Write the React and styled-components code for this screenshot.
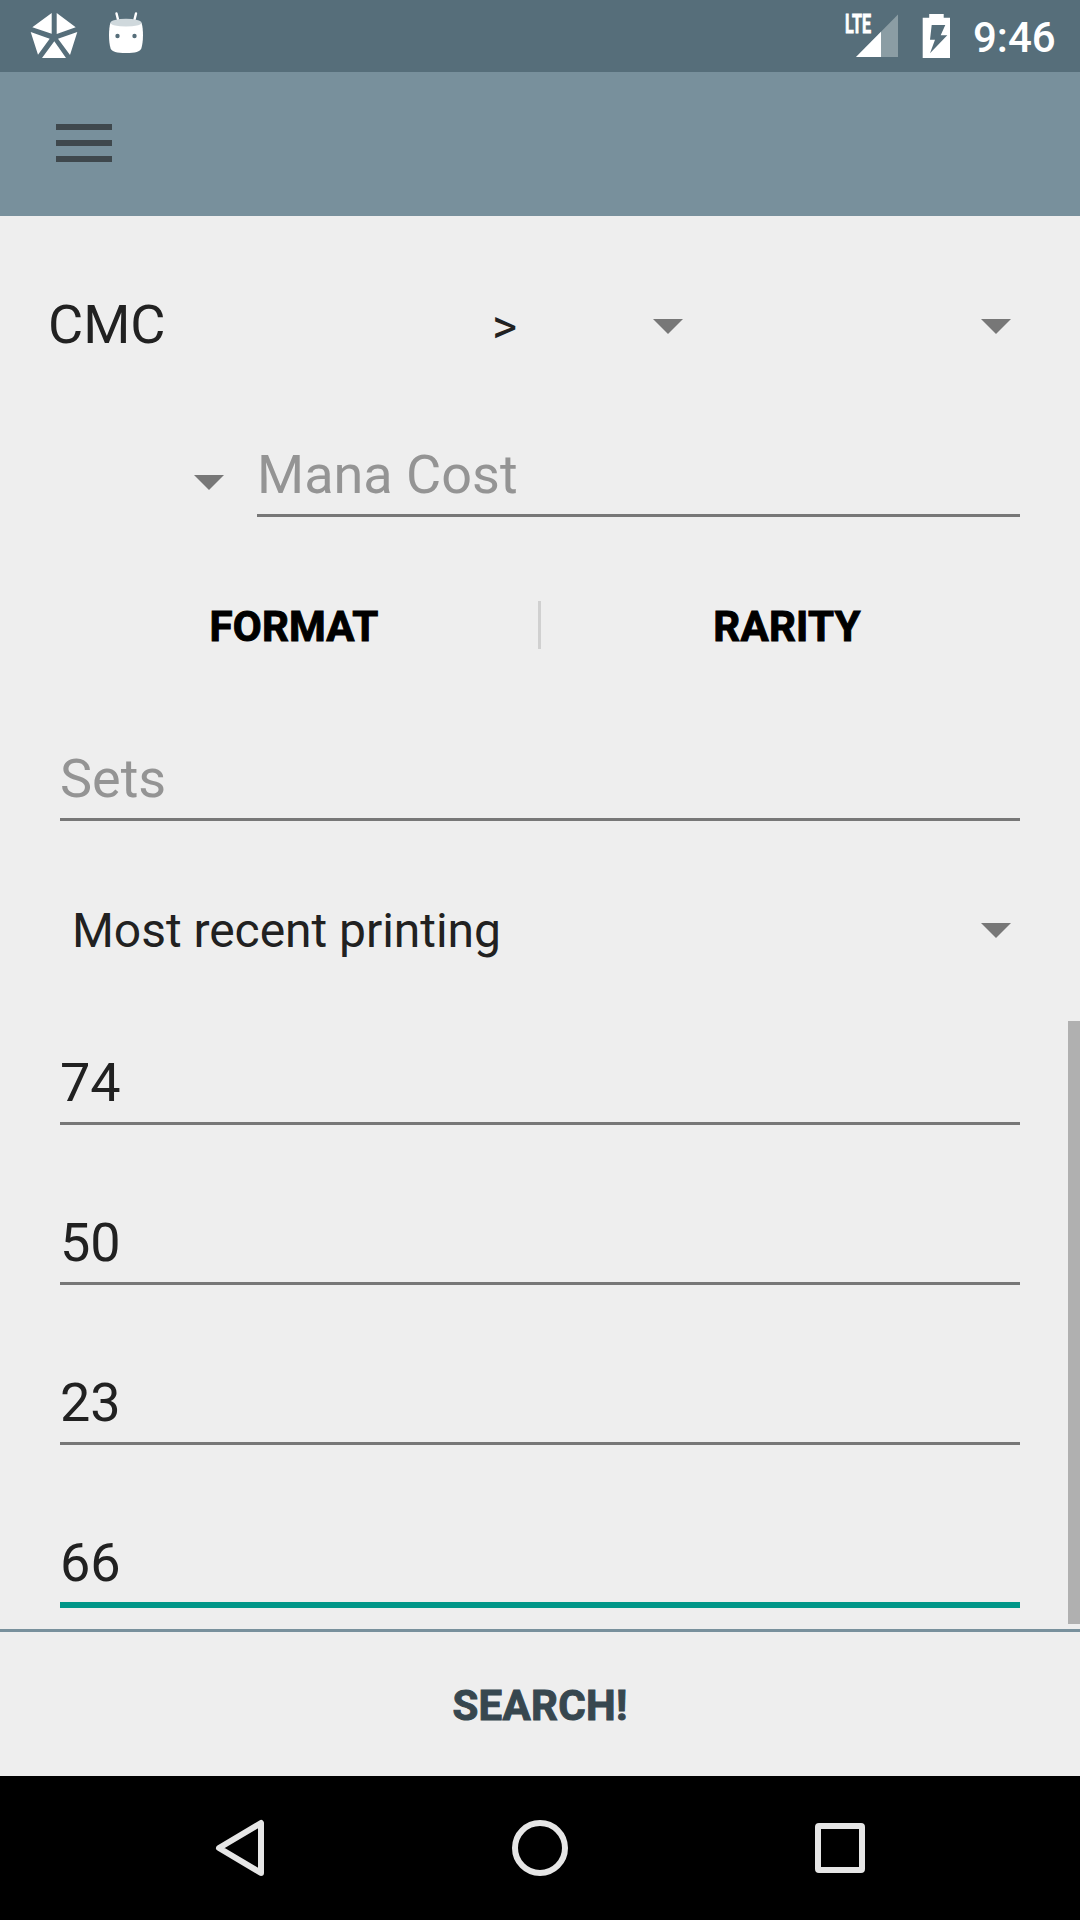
import React from "react";
import styled, { createGlobalStyle } from "styled-components";

const GlobalStyle = createGlobalStyle`
  *, *::before, *::after { box-sizing: border-box; }
  html, body { margin: 0; padding: 0; background: #eeeeee; }
  body { font-family: Roboto, "Noto Sans", sans-serif; overflow: hidden; }
`;

const Screen = styled.div`
  width: 1080px;
  height: 1920px;
  display: flex;
  flex-direction: column;
  background: #eeeeee;
  color: #212121;
`;

const StatusBar = styled.header`
  height: 72px;
  flex: none;
  display: flex;
  justify-content: space-between;
  background: #566e7a;
  color: #ffffff;
`;

const StatusIcons = styled.div`
  display: flex;
  height: 72px;
  gap: ${(p) => p.$gap || 0}px;
  padding-left: ${(p) => p.$left || 0}px;
  padding-right: ${(p) => p.$right || 0}px;
`;

const StatusGlyph = styled.svg`
  display: block;
  flex: none;
  height: 72px;
  width: ${(p) => p.$width}px;
`;

const Signal = styled.div`
  position: relative;
  width: 70px;
`;

const NetworkType = styled.span`
  position: absolute;
  left: 1px;
  top: 9px;
  font-size: 26px;
  line-height: 31px;
  font-weight: 700;
  -webkit-text-stroke: 0.8px #ffffff;
  transform: scaleX(0.62);
  transform-origin: left center;
`;

const Clock = styled.time`
  margin-left: 23px;
  width: 84px;
  font-size: 42px;
  line-height: 75px;
  font-weight: 500;
`;

const AppBar = styled.div`
  height: 144px;
  flex: none;
  background: #78909c;
  padding: 52px 56px;
`;

const MenuButton = styled.div`
  width: 56px;
  display: flex;
  flex-direction: column;
  gap: 10px;
`;

const MenuBar = styled.span`
  height: 6px;
  background: #3f484d;
`;

const ScrollArea = styled.main`
  position: relative;
  height: 1413px;
  flex: none;
  padding: 49px 60px 0;
  display: flex;
  flex-direction: column;
`;

const ScrollThumb = styled.div`
  position: absolute;
  right: 0;
  top: 805px;
  width: 12px;
  height: 603px;
  background: #b0b0b0;
`;

const CmcRow = styled.div`
  height: 120px;
  display: grid;
  grid-template-columns: 433px 202px 1fr;
  align-items: center;
  margin: 0 9px 0 -12px;
`;

const Label = styled.span`
  font-size: 54px;
  line-height: 64px;
`;

const Spinner = styled.div`
  display: flex;
  align-items: center;
  justify-content: space-between;
  height: ${(p) => p.$height || 60}px;
  padding-left: ${(p) => p.$inset || 0}px;
  font-size: 48px;
  line-height: 60px;
  letter-spacing: -0.05px;
  white-space: nowrap;
`;

const Operator = styled.span`
  padding-top: 4px;
`;

const Caret = styled.i`
  width: 0;
  height: 0;
  margin: 3px 0 0 auto;
  border: 15px solid transparent;
  border-top-color: #777777;
  border-bottom-width: 0;
`;

const PrintingSpinner = styled(Spinner)`
  margin: 80px 9px 4px 0;

  ${Caret} {
    margin-top: -1px;
  }
`;

const ManaRow = styled.div`
  margin-top: 58px;
  height: 74px;
  display: grid;
  grid-template-columns: 164px 1fr;
  column-gap: 33px;
`;

const Field = styled.div`
  margin-top: ${(p) => p.$gap || 0}px;
  height: ${(p) => (p.$focused ? 77 : 74)}px;
  border-bottom: ${(p) => (p.$focused ? "6px solid #009688" : "3px solid #777777")};
  font-size: 54px;
  line-height: 64px;
  white-space: nowrap;
  color: ${(p) => (p.$hint ? "#949494" : "#212121")};
`;

const ButtonBar = styled.div`
  margin: 84px -11px 0 -12px;
  height: 48px;
  display: flex;
  align-items: center;
`;

const FlatButton = styled.div`
  flex: 1;
  padding: 3px 0 0 2px;
  text-align: center;
  font-size: 42px;
  line-height: 48px;
  font-weight: 700;
  letter-spacing: 0.2px;
  color: #000000;
  -webkit-text-stroke: 1px currentColor;
`;

const Divider = styled.span`
  width: 3px;
  height: 48px;
  background: #d0d0d0;
`;

const SearchButton = styled.div`
  height: 147px;
  flex: none;
  border-top: 3px solid #78909c;
  text-align: center;
  font-size: 42px;
  line-height: 148px;
  font-weight: 700;
  letter-spacing: 0.3px;
  color: #37474f;
  -webkit-text-stroke: 1px currentColor;
`;

const NavBar = styled.nav`
  flex: 1;
  display: flex;
  justify-content: center;
  align-items: center;
  gap: 240px;
  background: #000000;
`;

const NavIcon = styled.svg`
  width: 60px;
  height: 60px;
  fill: none;
  stroke: #e6e6e6;
  stroke-width: 6;
  stroke-linejoin: round;
`;

const entries = ["74", "50", "23", "66"];

function PinwheelIcon() {
  return (
    <StatusGlyph $width={48} viewBox="0 0 48 72" fill="#fff">
      <path d="M21.7 13v20.7L2.3 27.3zM26.7 13v21l19-6.7zM.7 32l19 6.7L8 54.7zM47.3 32l-19.3 6.7 12 16.3zM24.3 41.3L12 58h24z" />
    </StatusGlyph>
  );
}

function RobotIcon() {
  return (
    <StatusGlyph $width={36} viewBox="0 0 36 72">
      <path d="M8.5 13.5l2 8M28 13.5l-2 8" stroke="#fff" strokeWidth="2.4" strokeLinecap="round" />
      <path d="M2.4 23C.5 29 .5 42 2.6 48.5c1.2 3.2 6 4.5 15.4 4.5s14.2-1.3 15.3-4.5c2.2-6.5 2.2-19.5.3-25.5z" fill="#fff" />
      <ellipse cx="18" cy="22.7" rx="15.6" ry="3.9" fill="#cfd8dc" />
      <circle cx="9.5" cy="36" r="2.2" fill="#566e7a" />
      <circle cx="26.5" cy="36" r="2.2" fill="#566e7a" />
    </StatusGlyph>
  );
}

function SignalIcon() {
  return (
    <StatusGlyph $width={56} viewBox="0 0 56 72">
      <path d="M54 14.5V57H12z" fill="#8b9da4" />
      <path d="M37 31.7V57H12z" fill="#fff" />
    </StatusGlyph>
  );
}

function BatteryIcon() {
  return (
    <StatusGlyph $width={36} viewBox="0 0 36 72">
      <path d="M16 14h15v3.7h7V58H9V17.700h7z" transform="translate(0 0)" fill="none" />
      <path d="M15.500 14h14.500v3.700h7V58H9V17.700h6.500z" transform="translate(-.3 0)" fill="#fff" />
      <path d="M17.700 25h13.600l-4.600 10.300h6.600L16 53.300l5-13.600h-5z" fill="#566e7a" />
    </StatusGlyph>
  );
}

export default function App() {
  return (
    <>
      <GlobalStyle />
      <Screen>
        <StatusBar>
          <StatusIcons $left={30} $gap={30}>
            <PinwheelIcon />
            <RobotIcon />
          </StatusIcons>
          <StatusIcons $right={23}>
            <Signal>
              <SignalIcon />
              <NetworkType>LTE</NetworkType>
            </Signal>
            <BatteryIcon />
            <Clock>9:46</Clock>
          </StatusIcons>
        </StatusBar>

        <AppBar>
          <MenuButton>
            <MenuBar />
            <MenuBar />
            <MenuBar />
          </MenuButton>
        </AppBar>

        <ScrollArea>
          <CmcRow>
            <Label>CMC</Label>
            <Spinner $inset={11}>
              <Operator>&gt;</Operator>
              <Caret />
            </Spinner>
            <Spinner>
              <Caret />
            </Spinner>
          </CmcRow>

          <ManaRow>
            <Spinner $height={76}>
              <Caret />
            </Spinner>
            <Field $hint>Mana Cost</Field>
          </ManaRow>

          <ButtonBar>
            <FlatButton>FORMAT</FlatButton>
            <Divider />
            <FlatButton>RARITY</FlatButton>
          </ButtonBar>

          <Field $hint $gap={98}>Sets</Field>

          <PrintingSpinner $inset={12}>
            <span>Most recent printing</span>
            <Caret />
          </PrintingSpinner>

          {entries.map((value, i) => (
            <Field key={value} $gap={86} $focused={i === entries.length - 1}>
              {value}
            </Field>
          ))}

          <ScrollThumb />
        </ScrollArea>

        <SearchButton>SEARCH!</SearchButton>

        <NavBar>
          <NavIcon viewBox="0 0 60 60">
            <path d="M51 5v50L9 30z" />
          </NavIcon>
          <NavIcon viewBox="0 0 60 60">
            <circle cx="30" cy="30" r="25" />
          </NavIcon>
          <NavIcon viewBox="0 0 60 60">
            <rect x="8" y="8" width="44" height="44" rx="1" />
          </NavIcon>
        </NavBar>
      </Screen>
    </>
  );
}
